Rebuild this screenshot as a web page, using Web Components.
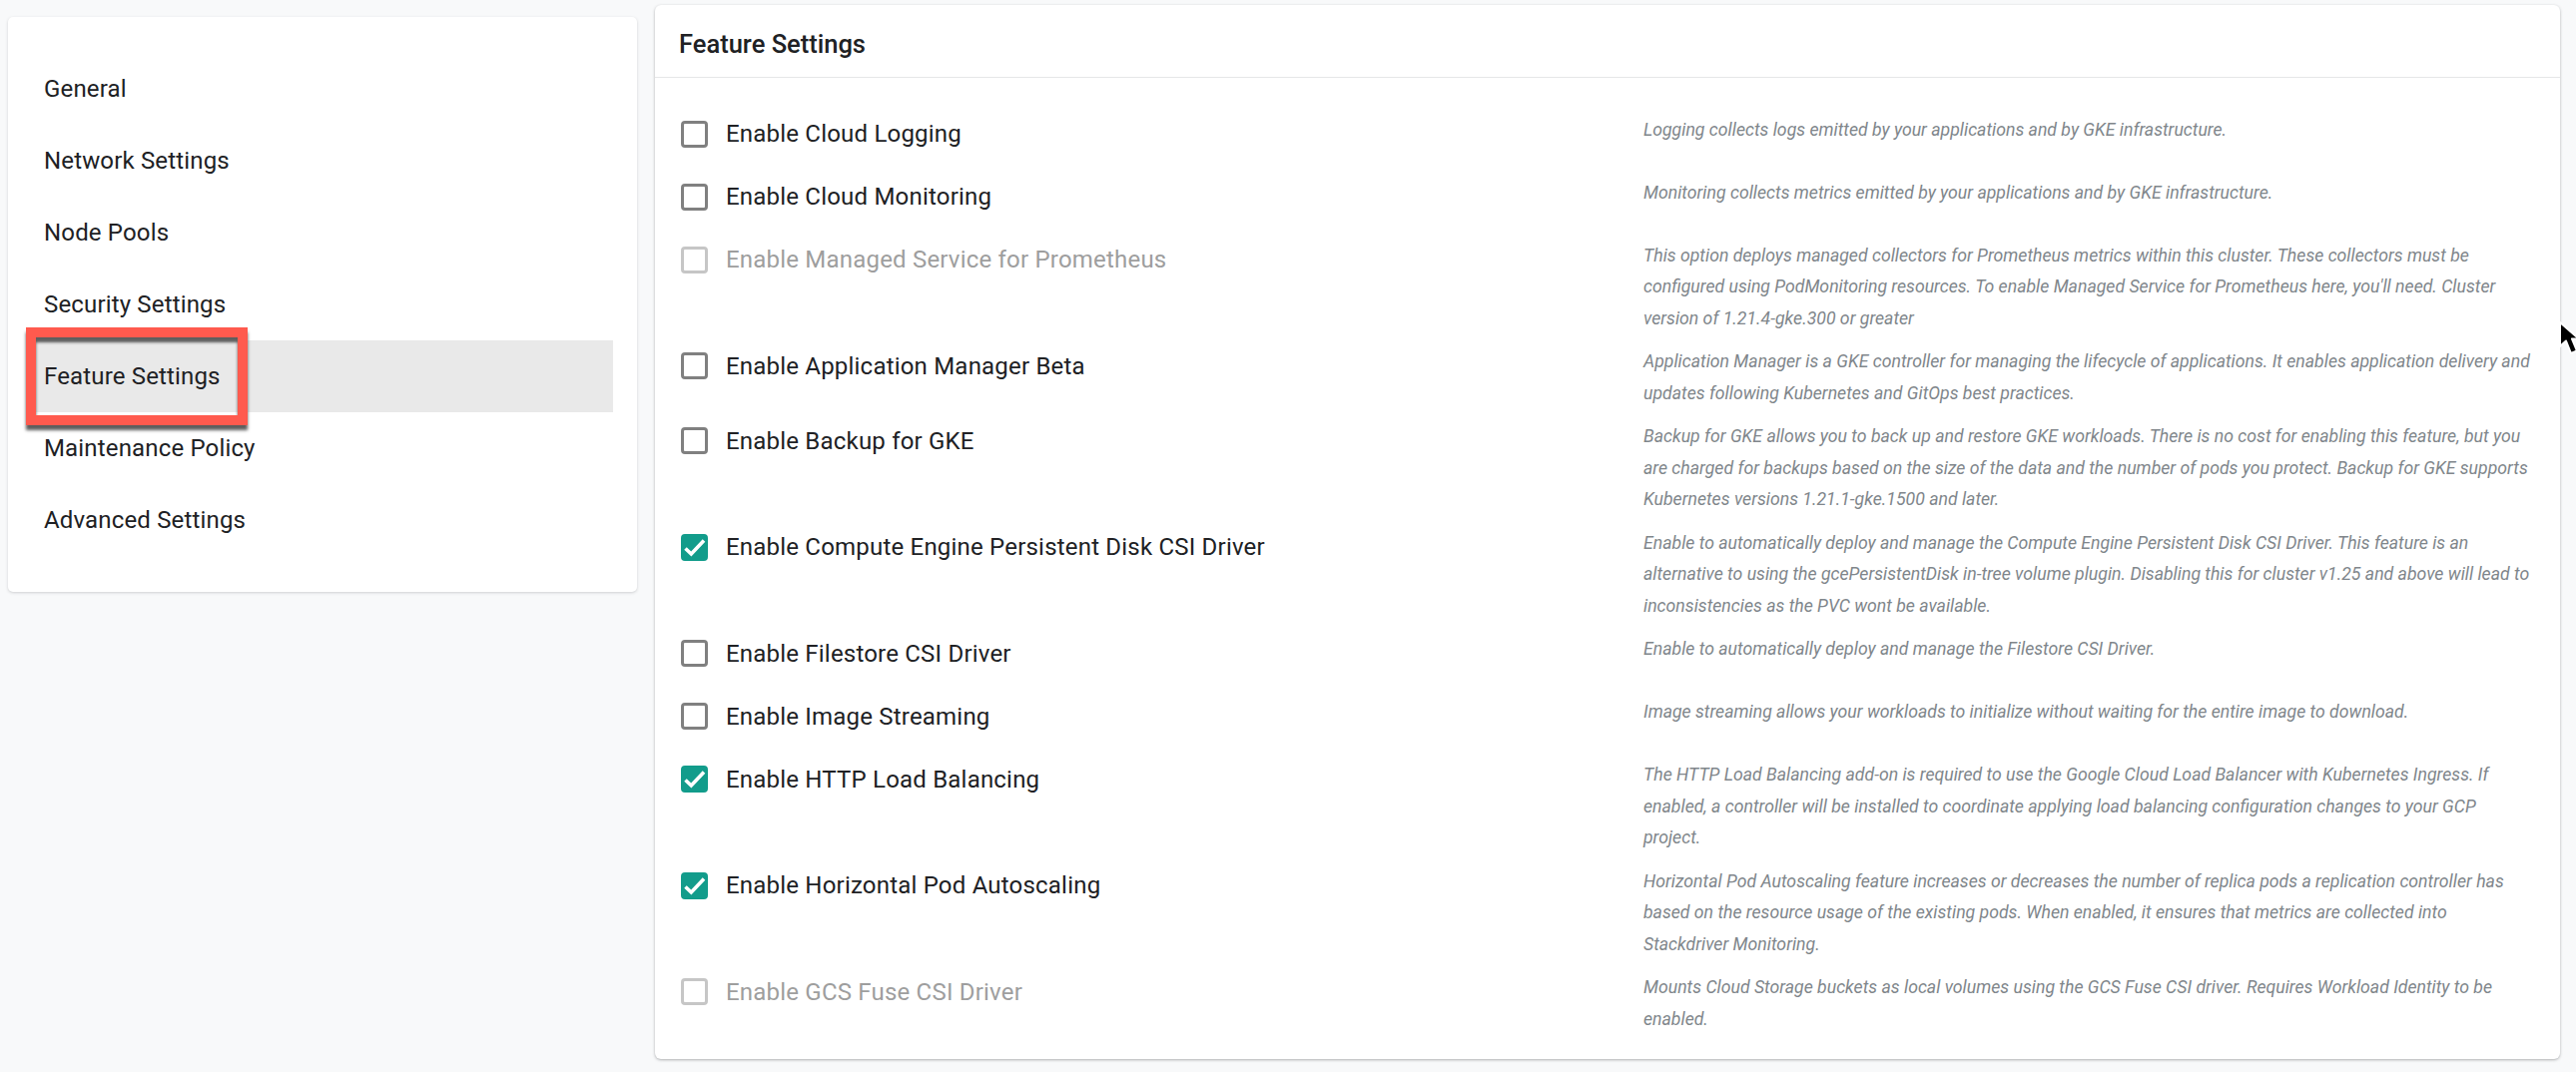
<!DOCTYPE html>
<html><head><meta charset="utf-8">
<style>
html,body{margin:0;padding:0;background:#f8f9fa;width:2580px;height:1074px;overflow:hidden;font-family:Roboto,"Liberation Sans",sans-serif;color:#202124}
</style></head><body>
<settings-page>
<side-nav slot="nav">
<nav-item>General</nav-item>
<nav-item>Network Settings</nav-item>
<nav-item>Node Pools</nav-item>
<nav-item>Security Settings</nav-item>
<nav-item active highlight>Feature Settings</nav-item>
<nav-item>Maintenance Policy</nav-item>
<nav-item>Advanced Settings</nav-item>
</side-nav>
<feature-card slot="main" title-text="Feature Settings">
<feature-row label="Enable Cloud Logging">Logging collects logs emitted by your applications and by GKE infrastructure.</feature-row>
<feature-row label="Enable Cloud Monitoring">Monitoring collects metrics emitted by your applications and by GKE infrastructure.</feature-row>
<feature-row label="Enable Managed Service for Prometheus" disabled>This option deploys managed collectors for Prometheus metrics within this cluster. These collectors must be configured using PodMonitoring resources. To enable Managed Service for Prometheus here, you'll need. Cluster version of 1.21.4-gke.300 or greater</feature-row>
<feature-row label="Enable Application Manager Beta">Application Manager is a GKE controller for managing the lifecycle of applications. It enables application delivery and updates following Kubernetes and GitOps best practices.</feature-row>
<feature-row label="Enable Backup for GKE">Backup for GKE allows you to back up and restore GKE workloads. There is no cost for enabling this feature, but you are charged for backups based on the size of the data and the number of pods you protect. Backup for GKE supports Kubernetes versions 1.21.1-gke.1500 and later.</feature-row>
<feature-row label="Enable Compute Engine Persistent Disk CSI Driver" checked>Enable to automatically deploy and manage the Compute Engine Persistent Disk CSI Driver. This feature is an alternative to using the gcePersistentDisk in-tree volume plugin. Disabling this for cluster v1.25 and above will lead to inconsistencies as the PVC wont be available.</feature-row>
<feature-row label="Enable Filestore CSI Driver">Enable to automatically deploy and manage the Filestore CSI Driver.</feature-row>
<feature-row label="Enable Image Streaming">Image streaming allows your workloads to initialize without waiting for the entire image to download.</feature-row>
<feature-row label="Enable HTTP Load Balancing" checked>The HTTP Load Balancing add-on is required to use the Google Cloud Load Balancer with Kubernetes Ingress. If enabled, a controller will be installed to coordinate applying load balancing configuration changes to your GCP project.</feature-row>
<feature-row label="Enable Horizontal Pod Autoscaling" checked>Horizontal Pod Autoscaling feature increases or decreases the number of replica pods a replication controller has based on the resource usage of the existing pods. When enabled, it ensures that metrics are collected into<br>Stackdriver Monitoring.</feature-row>
<feature-row label="Enable GCS Fuse CSI Driver" disabled>Mounts Cloud Storage buckets as local volumes using the GCS Fuse CSI driver. Requires Workload Identity to be enabled.</feature-row>
</feature-card>
<mouse-cursor slot="overlay"></mouse-cursor>
</settings-page>
<script>
function def(name, html, setup){
  customElements.define(name, class extends HTMLElement{
    connectedCallback(){
      if(this.shadowRoot) return;
      const r=this.attachShadow({mode:'open'});
      r.innerHTML=html;
      if(setup) setup(this,r);
    }
  });
}
def('settings-page',`<style>
:host{display:flex;position:relative;width:2580px;height:1074px;box-sizing:border-box;padding-left:8px;gap:18px;align-items:flex-start}
</style><slot name="nav"></slot><slot name="main"></slot><slot name="overlay"></slot>`);
def('side-nav',`<style>
:host{display:block;box-sizing:border-box;width:630px;height:576px;margin-top:17px;padding:36px 24px;background:#fff;border-radius:5px;box-shadow:0 1px 3px rgba(60,64,67,.22)}
</style><slot></slot>`);
def('nav-item',`<style>
:host{display:flex;align-items:center;position:relative;height:72px;padding-left:12px;font-size:24px;color:#202124;letter-spacing:.16px}
:host([active]){background:#e9e9e9}
.call{display:none;position:absolute;left:-6px;top:-13px;width:222px;height:98px;box-sizing:border-box;border:10px solid #ff5a4e;box-shadow:0 5px 3px rgba(40,40,40,.75),inset 0 5px 3px rgba(40,40,40,.75)}
:host([highlight]) .call{display:block}
</style><slot></slot><div class="call"></div>`);
def('feature-card',`<style>
:host{display:block;box-sizing:border-box;width:1908px;height:1056px;margin-top:5px;background:#fff;border-radius:6px;box-shadow:0 1px 3px rgba(60,64,67,.4)}
header{box-sizing:border-box;height:73px;border-bottom:1.5px solid #e6e7e8;padding:5px 0 0 24px;display:flex;align-items:center;font-size:25.5px;font-weight:500;color:#202124}
.body{padding:36.5px 0 0 26px}
</style><header></header><div class="body"><slot></slot></div>`,(h,r)=>{r.querySelector('header').textContent=h.getAttribute('title-text')});
def('check-box',`<style>
:host{display:block;box-sizing:border-box;width:27px;height:27px;border:3px solid #808080;border-radius:4px;position:relative}
:host([disabled]){border-color:#c6c6c6}
:host([checked]){background:#129c8b;border-color:#129c8b}
svg{display:none;position:absolute;left:-3px;top:-3px;width:27px;height:27px}
:host([checked]) svg{display:block}
</style><svg viewBox="0 0 27 27"><path d="M4.5 14.5L10.3 20L23 6.6" fill="none" stroke="#fff" stroke-width="3.6"/></svg>`);
def('feature-row',`<style>
:host{display:grid;grid-template-columns:964px 889px;min-height:63px;box-sizing:border-box;padding-bottom:12px}
.l{display:flex;align-items:center;gap:18px;height:39px;font-size:24px;color:#202124;letter-spacing:.2px}
:host([disabled]) .l{color:#9e9e9e}
.d{font-size:17.67px;line-height:31.5px;font-style:italic;color:#80868b}
</style><div class="l"><check-box></check-box><span></span></div><div class="d"><slot></slot></div>`,(h,r)=>{
  r.querySelector('span').textContent=h.getAttribute('label');
  const c=r.querySelector('check-box');
  if(h.hasAttribute('checked'))c.setAttribute('checked','');
  if(h.hasAttribute('disabled'))c.setAttribute('disabled','');
});
def('mouse-cursor',`<style>
:host{display:block;position:absolute;left:2564px;top:323px;width:16px;height:34px}
svg{display:block;overflow:visible}
</style><svg width="16" height="34" viewBox="0 0 16 34"><path d="M0 0L0 24L6 18.5L11 31L17 28.5L12 16.5L19 16.5Z" fill="#000" stroke="#fff" stroke-width="2" stroke-linejoin="round"/></svg>`);
</script>
</body></html>
